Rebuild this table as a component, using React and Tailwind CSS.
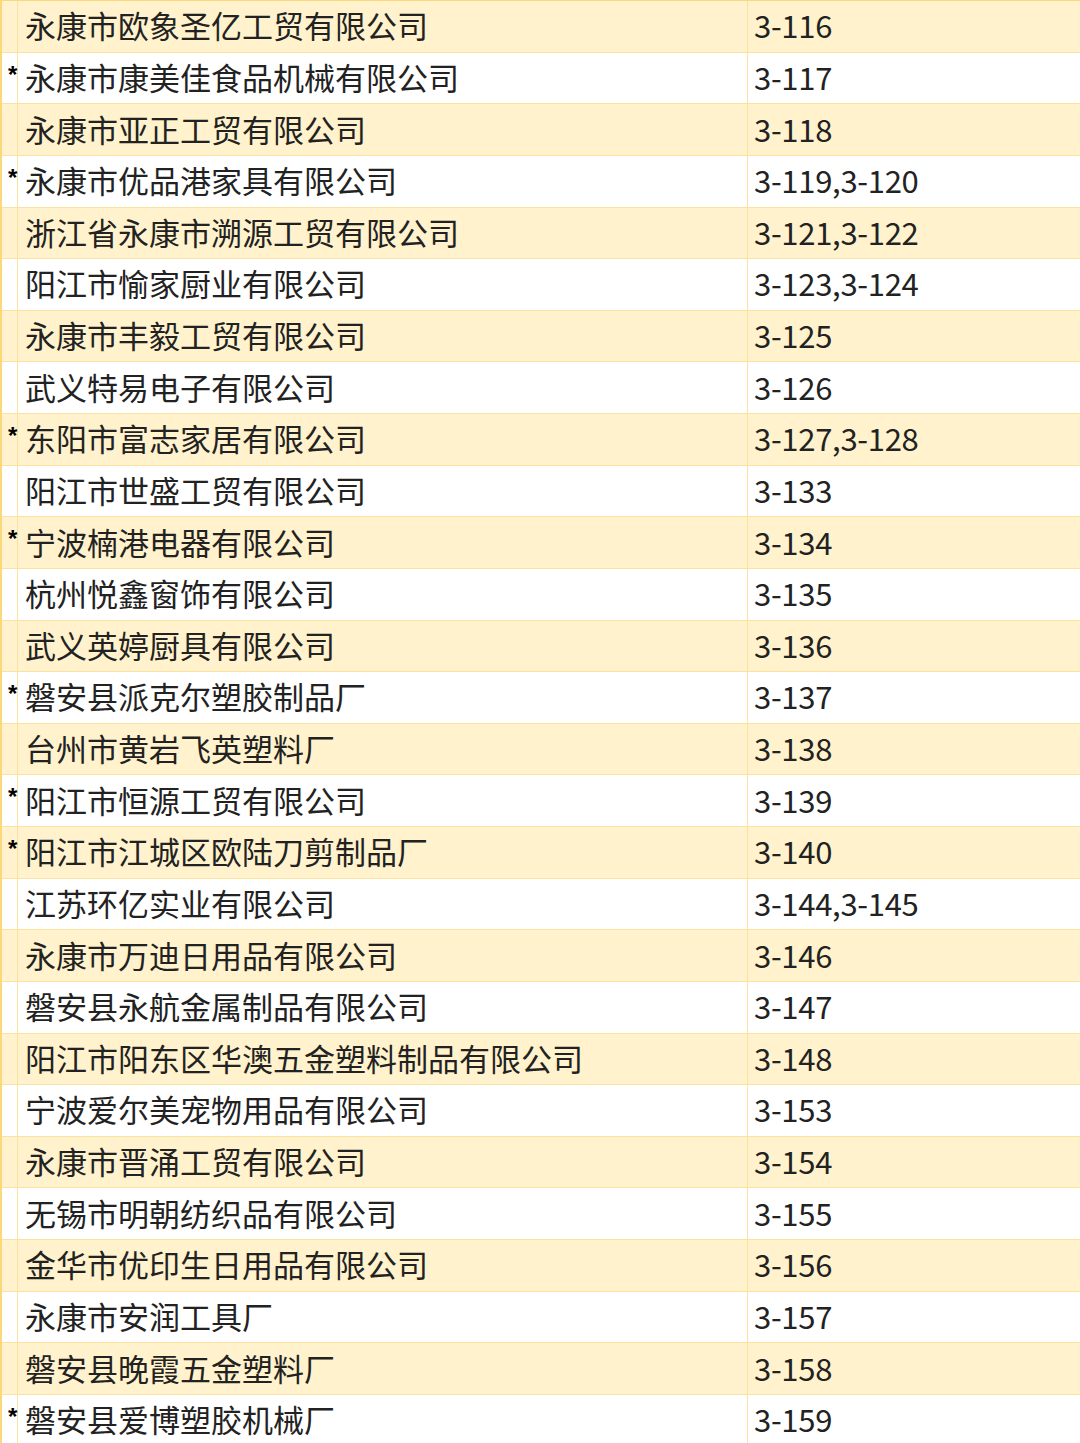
const rows = [
  ["永康市欧象圣亿工贸有限公司", "3-116", false],
  ["永康市康美佳食品机械有限公司", "3-117", true],
  ["永康市亚正工贸有限公司", "3-118", false],
  ["永康市优品港家具有限公司", "3-119,3-120", true],
  ["浙江省永康市溯源工贸有限公司", "3-121,3-122", false],
  ["阳江市愉家厨业有限公司", "3-123,3-124", false],
  ["永康市丰毅工贸有限公司", "3-125", false],
  ["武义特易电子有限公司", "3-126", false],
  ["东阳市富志家居有限公司", "3-127,3-128", true],
  ["阳江市世盛工贸有限公司", "3-133", false],
  ["宁波楠港电器有限公司", "3-134", true],
  ["杭州悦鑫窗饰有限公司", "3-135", false],
  ["武义英婷厨具有限公司", "3-136", false],
  ["磐安县派克尔塑胶制品厂", "3-137", true],
  ["台州市黄岩飞英塑料厂", "3-138", false],
  ["阳江市恒源工贸有限公司", "3-139", true],
  ["阳江市江城区欧陆刀剪制品厂", "3-140", true],
  ["江苏环亿实业有限公司", "3-144,3-145", false],
  ["永康市万迪日用品有限公司", "3-146", false],
  ["磐安县永航金属制品有限公司", "3-147", false],
  ["阳江市阳东区华澳五金塑料制品有限公司", "3-148", false],
  ["宁波爱尔美宠物用品有限公司", "3-153", false],
  ["永康市晋涌工贸有限公司", "3-154", false],
  ["无锡市明朝纺织品有限公司", "3-155", false],
  ["金华市优印生日用品有限公司", "3-156", false],
  ["永康市安润工具厂", "3-157", false],
  ["磐安县晚霞五金塑料厂", "3-158", false],
  ["磐安县爱博塑胶机械厂", "3-159", true],
];

export default function App() {
  return (
    <div className="h-[1443px] w-[1080px] overflow-hidden bg-white">
      <div className="border-l-2 border-t border-[#fbd879] font-['Noto_Sans_CJK_SC','Noto_Sans',sans-serif] text-[31px] text-[#222]">
        {rows.map(([name, code, star], i) => (
          <div
            key={code}
            className={
              "flex h-[51.63px] border-b border-[#fae2a0] " +
              (i % 2 === 0 ? "bg-[#fff2cc]" : "bg-white")
            }
          >
            <div className="w-[16px] shrink-0 border-r border-[#fae2a0] pl-[6px] pt-[10px] font-['Liberation_Sans',sans-serif] text-[24px] font-bold leading-none text-black">
              {star ? "*" : ""}
            </div>
            <div className="flex w-[730px] shrink-0 items-center border-r border-[#fae2a0] pb-[3px] pl-[7px] leading-none">
              {name}
            </div>
            <div className="flex flex-1 items-center pb-[3px] pl-[6px] leading-none tracking-[-0.3px]">{code}</div>
          </div>
        ))}
      </div>
    </div>
  );
}
